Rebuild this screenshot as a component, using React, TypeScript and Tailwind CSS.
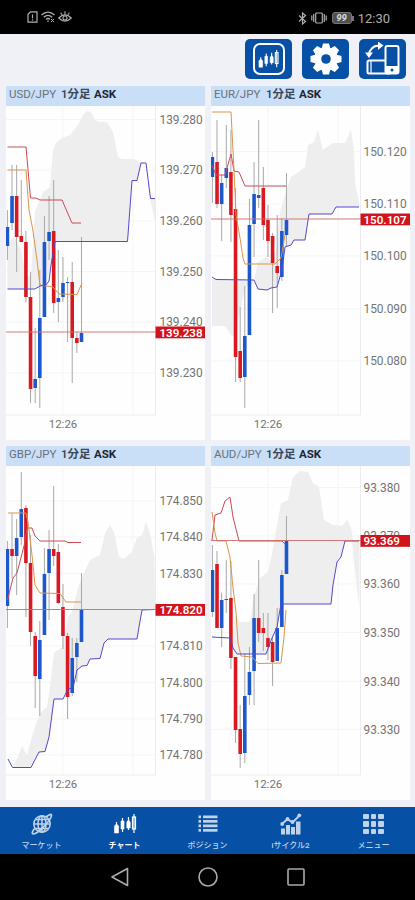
import clsx from "clsx"

type Point = [number, number]
// wick top, wick bottom, body top, body bottom, rising or falling
type Candle = [number, number, number, number, "u" | "d"]

interface ChartData {
  pair: string
  origin: Point
  candles: Candle[]
  cloud: string[]
  red: string
  orange: string
  blue: string
  labels: [string, number][]
  price: string
  priceY: number
}

const STEP = 4.63

const charts: ChartData[] = [
  {
    pair: "USD/JPY",
    origin: [6, 106],
    candles: [
      [210, 260, 227, 246, "u"],
      [165, 230, 196, 223, "u"],
      [165, 272, 196, 237, "d"],
      [180, 242, 236, 242, "d"],
      [231, 302, 242, 297, "d"],
      [272, 403, 297, 389, "d"],
      [328, 403, 379, 388, "u"],
      [270, 408, 318, 378, "u"],
      [216, 317, 242, 317, "u"],
      [196, 260, 232, 241, "u"],
      [180, 313, 231, 303, "d"],
      [250, 322, 298, 302, "u"],
      [257, 302, 283, 297, "u"],
      [277, 342, 282, 283, "u"],
      [262, 383, 282, 338, "d"],
      [332, 353, 338, 343, "d"],
      [237, 342, 333, 342, "u"],
    ],
    cloud: [
      "7.5,245 14,236 21,250 26,278 31,275 35,212 43,192 50,187 53,150 56,143 62,138 70,135 78,125 83,115 87,111 91,112 95,120 100,122 107,122 113,132 118,157 122,159 134,159 141,163 137,180 132,180 127.5,241.5 55,241.5 51,265 46,285 40,286 35,289 7.5,289",
      "150,198 155,198 155,222",
    ],
    red: "7.5,147 26,147 30.5,198 36,198 40,200 62,200 72,223 81,223",
    orange: "7.5,170 26,170 29,210 33,231 37,260 40,285 53,287 59,294 77,294.5 82,283",
    blue: "7.5,289 35,289 40,286 46,285 49,281 51,265 55,241.5 127.5,241.5 132,180.5 137,180.5 141,163 146,163 150.5,198.5 155,198.5",
    labels: [
      ["139.280", 119.5],
      ["139.270", 170],
      ["139.260", 221],
      ["139.250", 271.5],
      ["139.240", 322],
      ["139.230", 373],
    ],
    price: "139.238",
    priceY: 332,
  },
  {
    pair: "EUR/JPY",
    origin: [211, 106],
    candles: [
      [152, 203, 157, 177, "u"],
      [120, 208, 162, 204, "d"],
      [175, 241, 183, 204, "u"],
      [125, 188, 168, 178, "u"],
      [130, 242, 172, 215, "d"],
      [188, 382, 209, 357, "d"],
      [307, 382, 351, 378, "d"],
      [286, 408, 336, 377, "u"],
      [199, 335, 225, 335, "u"],
      [162, 257, 194, 224, "u"],
      [120, 208, 195, 198, "u"],
      [167, 240, 188, 225, "d"],
      [205, 257, 220, 241, "d"],
      [233, 313, 236, 263, "d"],
      [215, 308, 266, 273, "d"],
      [218, 281, 231, 277, "u"],
      [173, 247, 220, 235, "u"],
    ],
    cloud: [
      "212,279 254,280 251,286 246,286 240,310 234,336 231,335 225,326 212,326",
      "254,280 258,262 266,257 272,262 276,250 280,212 285,195 291,177 300,171 305,167 308,145 314,142 318,130 323,150 333,143 345,143 351,130 354,150 355,183 359,202 359,207 336,207 332,214 309,214 305,240 294,240 291,245 285,247 282,270 277,287 271,288 267,290 258,289",
    ],
    red: "212,165 216,175 225,175 231,154 234,171 239,172 245,186 286,186",
    orange: "212,112 231,112 234,170 236,215 240,238 243,258 245,264 275,264 281,258 285,235",
    blue: "212,277 216,279.5 254,280 258,289 267,290 271,288 277,287 282,270 285,247 291,245 294,240 305,240 309,214 332,214 336,207 359,207",
    labels: [
      ["150.120", 151.5],
      ["150.110", 204],
      ["150.100", 256],
      ["150.090", 309],
      ["150.080", 361],
    ],
    price: "150.107",
    priceY: 219,
  },
  {
    pair: "GBP/JPY",
    origin: [6, 466],
    candles: [
      [541, 628, 549, 606, "u"],
      [513, 578, 549, 556, "d"],
      [519, 595, 538, 556, "u"],
      [472, 545, 509, 537, "u"],
      [505, 617, 508, 563, "d"],
      [535, 646, 563, 632, "d"],
      [632, 708, 636, 676, "d"],
      [621, 716, 640, 679, "u"],
      [548, 635, 574, 635, "u"],
      [530, 620, 549, 573, "u"],
      [486, 566, 549, 556, "d"],
      [544, 604, 552, 603, "d"],
      [584, 649, 607, 636, "d"],
      [633, 719, 636, 697, "d"],
      [638, 696, 658, 693, "u"],
      [638, 682, 643, 657, "u"],
      [573, 642, 610, 642, "u"],
    ],
    cloud: [
      "12.5,767 18,757 22,746 27,755 33,733 40,713 47,707 50,687 54,653 62,647 68,617 72,612 78,588 83,575 90,560 100,555 105,533 110,525 114,532 119,557 123,559 132,552 137,538 142,535 146,522 150,533 154.5,558 155,610 142,610 139,627 137,639 108,639 104,643 100,658.5 90,659 87,665.5 82,666 77,670 73,688 68,689 63,699 54,699 49,737 45,751.5 39,752 31,767.5",
    ],
    red: "7.5,600 13,578 17,573 25,542 27,528 32,528 35,536 40,541 65,541 68,542.5 81,542.5",
    orange: "8,513 26,513 28,522 32,555 35,585 40,593 60,593.5 66,602 81,602",
    blue: "8,759 12.5,767.5 31,767.5 39,752 45,751.5 49,737 54,699 63,699 68,689 73,688 77,670 82,666 87,665.5 90,659 100,658.5 104,643 108,639 137,639 139,627 142,610 155,609.5",
    labels: [
      ["174.850", 501],
      ["174.840", 537],
      ["174.830", 573.5],
      ["174.810", 646],
      ["174.800", 682.5],
      ["174.790", 719],
      ["174.780", 755],
    ],
    price: "174.820",
    priceY: 609.5,
  },
  {
    pair: "AUD/JPY",
    origin: [211, 466],
    candles: [
      [545, 617, 570, 612, "u"],
      [551, 628, 564, 628, "d"],
      [593, 647, 600, 628, "u"],
      [560, 613, 599, 600, "u"],
      [561, 669, 598, 658, "d"],
      [657, 743, 657, 730, "d"],
      [705, 768, 729, 754, "d"],
      [653, 763, 696, 753, "u"],
      [647, 705, 672, 695, "u"],
      [594, 705, 618, 671, "u"],
      [560, 642, 618, 633, "d"],
      [613, 651, 628, 633, "d"],
      [613, 660, 638, 647, "d"],
      [637, 686, 642, 662, "d"],
      [608, 661, 628, 661, "u"],
      [570, 627, 575, 627, "u"],
      [516, 574, 541, 574, "u"],
    ],
    cloud: [
      "232,646 235,616 240,622 250,622 254,596 260,578 268,572 273,548 281,503 288,500 293,477 300,471 308,472 313,483 319,487 324,520 333,525 342,526 347,520 351,527 353,541 345,541 341,557 337,562 333,585 331,604 281,604 277,627 272,638 266,654 237,654",
      "352,541 359.5,541 359.5,610 355,572",
    ],
    red: "212,540 215,515 221,513 225,501 230,497 233,517 237,533 239,541 282,541 285,544",
    orange: "212,512 215,533 217,541 226,541 230,557 233,588 236,612 238,643 241,656 252,657 258,663.5 281,663 284,637 286,610",
    blue: "212,637 230,638 233,648 237,654 266,654 272,638 277,627 281,604 331,604 333,585 337,562 341,557 345,541 359,541",
    labels: [
      ["93.380", 487.5],
      ["93.370", 536],
      ["93.360", 584],
      ["93.350", 632.5],
      ["93.340", 681.5],
      ["93.330", 729.5],
    ],
    price: "93.369",
    priceY: 540.5,
  },
]

function Chart({ data }: { data: ChartData }) {
  const [ox, oy] = data.origin
  const first = ox + 1.4
  const axis = ox + 149.5
  const labelX = ox + (ox > 200 ? 152.5 : 153.5)
  const bottom = oy + 309

  return (
    <section className="bg-[#fefefe]">
      <h2 className="flex h-5 items-center bg-[#c9dff7] px-[3px] pb-[3px] text-[11.5px] leading-none">
        <span className="w-[52px] text-[#6b7079]">{data.pair}</span>
        <span className="w-[33px] font-semibold text-[#3c4858]">1分足</span>
        <span className="text-[11.5px] font-bold text-[#1c2530]">ASK</span>
      </h2>
      <svg viewBox={`${ox} ${oy} 199 334`} className="block h-[334px] w-[199px]">
        <g stroke="#f5f5f6">
          {data.labels.map(([text, y]) => (
            <line key={text} x1={ox} x2={axis} y1={y} y2={y} />
          ))}
          <line x1={ox + 57} x2={ox + 57} y1={oy} y2={bottom} />
          <line x1={ox + 127} x2={ox + 127} y1={oy} y2={bottom} />
        </g>
        {data.cloud.map((points) => (
          <polygon key={points} points={points} fill="#eeeeef" />
        ))}
        <path d={`M${axis} ${oy}V${bottom}H${ox}`} fill="none" stroke="#ececee" />

        {data.candles.map(([high, low, top, end, dir], i) => {
          const x = first + i * STEP
          return (
            <g key={i}>
              <line x1={x} x2={x} y1={high} y2={low} stroke="#a8a8a8" />
              <rect x={x - 1.8} y={top} width={3.6} height={end - top} fill={dir === "u" ? "#1c58cc" : "#d81a20"} />
            </g>
          )
        })}
        <g fill="none" strokeLinejoin="round">
          <polyline points={data.red} stroke="#cc4a52" />
          <polyline points={data.orange} stroke="#d9954a" />
          <polyline points={data.blue} stroke="#5349cf" />
        </g>
        <line x1={ox} x2={axis} y1={data.priceY} y2={data.priceY} stroke="#cf6a6a" strokeWidth="0.9" />

        <g fontSize="11.9" fill="#747474">
          {data.labels.map(([text, y]) => (
            <text key={text} x={labelX} y={y + 4.2}>{text}</text>
          ))}
          <text x={ox + 57} y={oy + 322} fontSize="11.5" textAnchor="middle">12:26</text>
        </g>
        <rect x={ox + 149.5} y={data.priceY - 5.5} width={49.5} height={11.8} fill="#d2131b" />
        <text x={labelX} y={data.priceY + 4.5} fontSize="11.6" fontWeight="600" fill="#fff">{data.price}</text>
      </svg>
    </section>
  )
}

function CandleIcon({ className }: { className?: string }) {
  return (
    <svg viewBox="0 0 24 22" className={className} fill="currentColor" stroke="currentColor">
      <path d="M3.5 9v4M9.5 5v14M15.5 4v13M21 1v19" fill="none" strokeWidth="1.2" />
      <path d="M1.5 13l2-2 2 2v7h-4zM8 8h3v8H8zM13.8 9l1.7-2 1.7 2v6h-3.4z" strokeWidth="0.6" />
      <rect x="19.5" y="4" width="3" height="12" fill="none" strokeWidth="1.2" />
    </svg>
  )
}

function ToolButton({ children }: { children: React.ReactNode }) {
  return (
    <button className="flex h-10 w-[47px] items-center justify-center rounded-[5px] bg-[#0651a5] text-white">
      {children}
    </button>
  )
}

function StatusBar() {
  return (
    <header className="flex h-[34px] items-center justify-between bg-black pr-[25px] pl-[27px] text-[#aeaeae]">
      <div className="flex gap-[3px]">
        <svg viewBox="0 0 11 12" className="h-3 w-[11px]" fill="none" stroke="currentColor" strokeWidth="1.2">
          <path d="M1 3.5 3.5.8H10v10.4H1zM5.5 3.5v3.7M5.5 8.3v1.2" />
        </svg>
        <svg viewBox="0 0 14 12" className="h-3 w-[14px]" fill="none" stroke="currentColor" strokeWidth="1.3">
          <path d="M.5 4Q7-1.8 13.5 4M2.8 6.2Q7 2.5 11.2 6.2M5 8.4Q7 6.5 9 8.4M7 9.5v1.5" />
          <path d="m10 8 3 3m0-3-3 3" strokeWidth="1" />
        </svg>
        <svg viewBox="0 0 14 12" className="h-3 w-[14px]" fill="none" stroke="currentColor" strokeWidth="1.1">
          <path d="M.7 7Q7 .8 13.3 7 7 13.2.7 7zM7 .3v3M2.6 1.7l1.5 2.1M11.4 1.7 9.9 3.8" />
          <circle cx="7" cy="7" r="2" />
        </svg>
      </div>
      <div className="flex items-center gap-[4px] pt-[2px]">
        <svg viewBox="0 0 9 13" className="h-[13px] w-[9px]" fill="none" stroke="currentColor" strokeWidth="1.2">
          <path d="m1 3.5 6.5 6L4.5 12V1l3 2.5-6.5 6" />
        </svg>
        <svg viewBox="0 0 16 12" className="h-3 w-4" fill="none" stroke="currentColor" strokeWidth="1.2">
          <rect x="4.7" y="1" width="6.6" height="10" rx="0.8" />
          <path d="M2.7 2v8M.8 3.5v5M13.3 2v8M15.2 3.5v5" />
        </svg>
        <span className="flex items-center pl-[1px]">
          <span className="flex h-[12px] w-[20px] items-center justify-center rounded-[3px] border border-[#777] bg-[#505050] text-[9.5px] leading-none font-bold text-[#ddd] italic">
            99
          </span>
          <span className="h-[5px] w-[2px] bg-[#777]" />
        </span>
        <span className="text-[13px] leading-none">12:30</span>
      </div>
    </header>
  )
}

const tabs = [
  {
    label: "マーケット",
    icon: (
      <svg viewBox="0 0 24 24" className="h-[24px] w-[24px]" fill="none" stroke="currentColor" strokeWidth="1.5">
        <circle cx="12" cy="12" r="8.2" />
        <ellipse cx="12" cy="12" rx="4" ry="8.2" />
        <path d="M12 4v16M4 12h16M5.5 7.5h13M5.5 16.5h13" />
        <path d="M5 16c-3 3.5-3.5 6-1.5 6C8 22 21 8 21.5 3.5 21.7 1.5 19 2.5 16 5" strokeWidth="1.7" />
      </svg>
    ),
  },
  { label: "チャート", icon: <CandleIcon className="h-[22px] w-6" />, active: true },
  {
    label: "ポジション",
    icon: (
      <svg viewBox="0 0 20 18" className="h-[18px] w-5" fill="currentColor">
        {[0.5, 5, 9.5, 14].map((y) => (
          <g key={y}>
            <rect x="0.5" y={y} width="2.5" height="2.7" />
            <rect x="5" y={y} width="14.5" height="2.7" />
          </g>
        ))}
      </svg>
    ),
  },
  {
    label: "iサイクル2",
    icon: (
      <svg viewBox="0 0 22 22" className="h-[22px] w-[22px]" fill="currentColor">
        <path d="M1 15.5h4V21.500H1zM6 12h4v9.500H6zM11 14h4v7.500h-4zM16 8.500h4.500v13H16z" />
        <path d="m2 11 5.500-5 5 3.500 7-7" fill="none" stroke="currentColor" strokeWidth="1.8" />
        <circle cx="2.2" cy="11" r="1.9" />
        <circle cx="7.5" cy="6" r="1.9" />
        <circle cx="12.5" cy="9" r="1.9" />
        <circle cx="19.3" cy="2.3" r="1.9" />
      </svg>
    ),
  },
  {
    label: "メニュー",
    icon: (
      <span className="grid grid-cols-3 gap-[2px]">
        {Array.from({ length: 9 }, (_, i) => (
          <span key={i} className="size-[5.5px] rounded-[1px] bg-current" />
        ))}
      </span>
    ),
  },
]

export default function App() {
  return (
    <div className="flex h-[900px] w-[415px] flex-col overflow-hidden bg-[#eff1f6] font-[Roboto,'Noto_Sans_CJK_JP',sans-serif]">
      <StatusBar />
      <div className="flex h-[52px] justify-end gap-[10px] pt-[5px] pr-[9px]">
        <ToolButton>
          <span className="flex h-8 w-8 items-center justify-center rounded-[7px] border-2 border-white">
            <CandleIcon className="h-5 w-[23px]" />
          </span>
        </ToolButton>
        <ToolButton>
          <svg viewBox="-16 -16 32 32" className="h-8 w-8">
            <g fill="white">
              {[0, 45, 90, 135].map((angle) => (
                <path key={angle} d="M-4.5-10l1.5-5.500h6L4.500-10v20L3 15.500h-6L-4.500 10z" transform={`rotate(${angle})`} />
              ))}
              <circle r="11.5" />
            </g>
            <circle r="4.8" fill="#0651a5" />
          </svg>
        </ToolButton>
        <ToolButton>
          <svg viewBox="0 0 36 34" className="h-[34px] w-9" fill="none" stroke="white">
            <rect x="2.5" y="18.5" width="23" height="13" rx="1.5" strokeWidth="2" />
            <path d="M6 19v12" strokeWidth="1.2" />
            <rect x="20.5" y="4" width="13" height="27.5" rx="2" fill="#0651a5" strokeWidth="2" />
            <path d="M20 24h14v6q0 2-2 2H22q-2 0-2-2z" fill="white" stroke="none" />
            <circle cx="27" cy="28" r="1.5" fill="#0651a5" stroke="none" />
            <path d="M4 13Q5 4 14 3.5" strokeWidth="2" />
            <path d="M13-.5 18.5 3.5 13 8zM0 10.5h8L4 16z" fill="white" stroke="none" />
          </svg>
        </ToolButton>
      </div>

      <main className="grid h-[721px] grid-cols-[199px_199px] content-start gap-[6px] pl-[6px]">
        {charts.map((data) => (
          <Chart key={data.pair} data={data} />
        ))}
      </main>

      <nav className="grid h-[47px] grid-cols-5 bg-[#0651a5] text-[#bfd2e9]">
        {tabs.map(({ label, icon, active }) => (
          <button key={label} className={clsx("flex flex-col items-center", active && "text-white")}>
            <span className="flex h-[34px] items-center justify-center">{icon}</span>
            <span className={clsx("text-[8px] leading-[9px]", active ? "font-bold" : "font-medium")}>{label}</span>
          </button>
        ))}
      </nav>
      <footer className="flex h-[46px] items-center justify-center gap-[68px] bg-black text-[#ababab]">
        <svg viewBox="0 0 20 20" className="size-5" fill="none" stroke="currentColor" strokeWidth="1.6">
          <path d="M2 10 17.5 1.5v17z" strokeLinejoin="round" />
        </svg>
        <svg viewBox="0 0 20 20" className="size-5" fill="none" stroke="currentColor" strokeWidth="1.6">
          <circle cx="10" cy="10" r="9" />
        </svg>
        <svg viewBox="0 0 20 20" className="size-5" fill="none" stroke="currentColor" strokeWidth="1.6">
          <rect x="2" y="2" width="16" height="16" rx="1" />
        </svg>
      </footer>
    </div>
  )
}
